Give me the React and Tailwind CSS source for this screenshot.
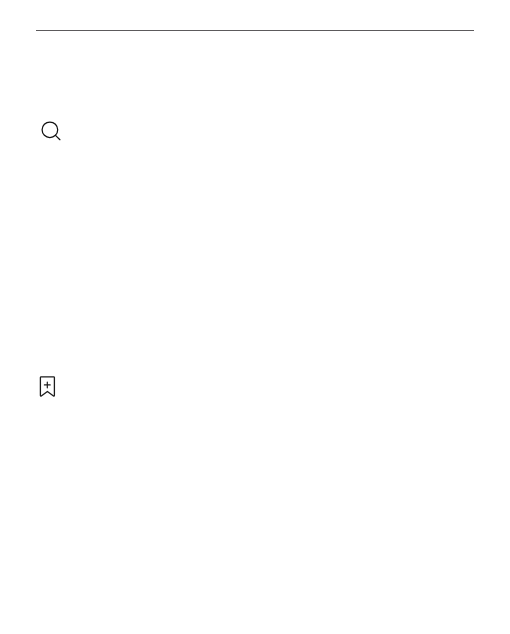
function SearchIcon() {
  return (
    <svg className="block h-[30px] w-[30px]" viewBox="0 0 30 30" fill="none" stroke="#111111" strokeWidth="1.25" strokeLinecap="round">
      <circle cx="13.9" cy="13.8" r="7.8" />
      <path d="M19.5 19.4 23.9 23.7" />
    </svg>
  );
}

function BookmarkPlusIcon() {
  return (
    <svg className="block h-[30px] w-[30px]" viewBox="0 0 30 30" fill="none" stroke="#1c1c1c" strokeWidth="1.3" strokeLinejoin="round" strokeLinecap="round">
      <path d="M9.1 5.8H21.6Q22.4 5.8 22.4 6.6V24.3Q22.4 25.4 21.5 24.9L15.4 20.4 9.3 24.9Q8.4 25.4 8.4 24.3V6.6Q8.4 5.8 9.1 5.8Z" />
      <path d="M12.4 13.9H18.2M15.3 11V16.8" strokeWidth="1.2" />
    </svg>
  );
}

export default function App() {
  return (
    <main className="flex h-[634px] w-[510px] flex-col bg-white px-9 pt-[30px]">
      <hr className="h-px w-full border-0 bg-[#5c5a5c]" />
      <button type="button" aria-label="Search" className="mt-[85px] h-[30px] w-[30px]">
        <SearchIcon />
      </button>
      <button type="button" aria-label="Save bookmark" className="mt-[225px] -ml-1 h-[30px] w-[30px]">
        <BookmarkPlusIcon />
      </button>
    </main>
  );
}
